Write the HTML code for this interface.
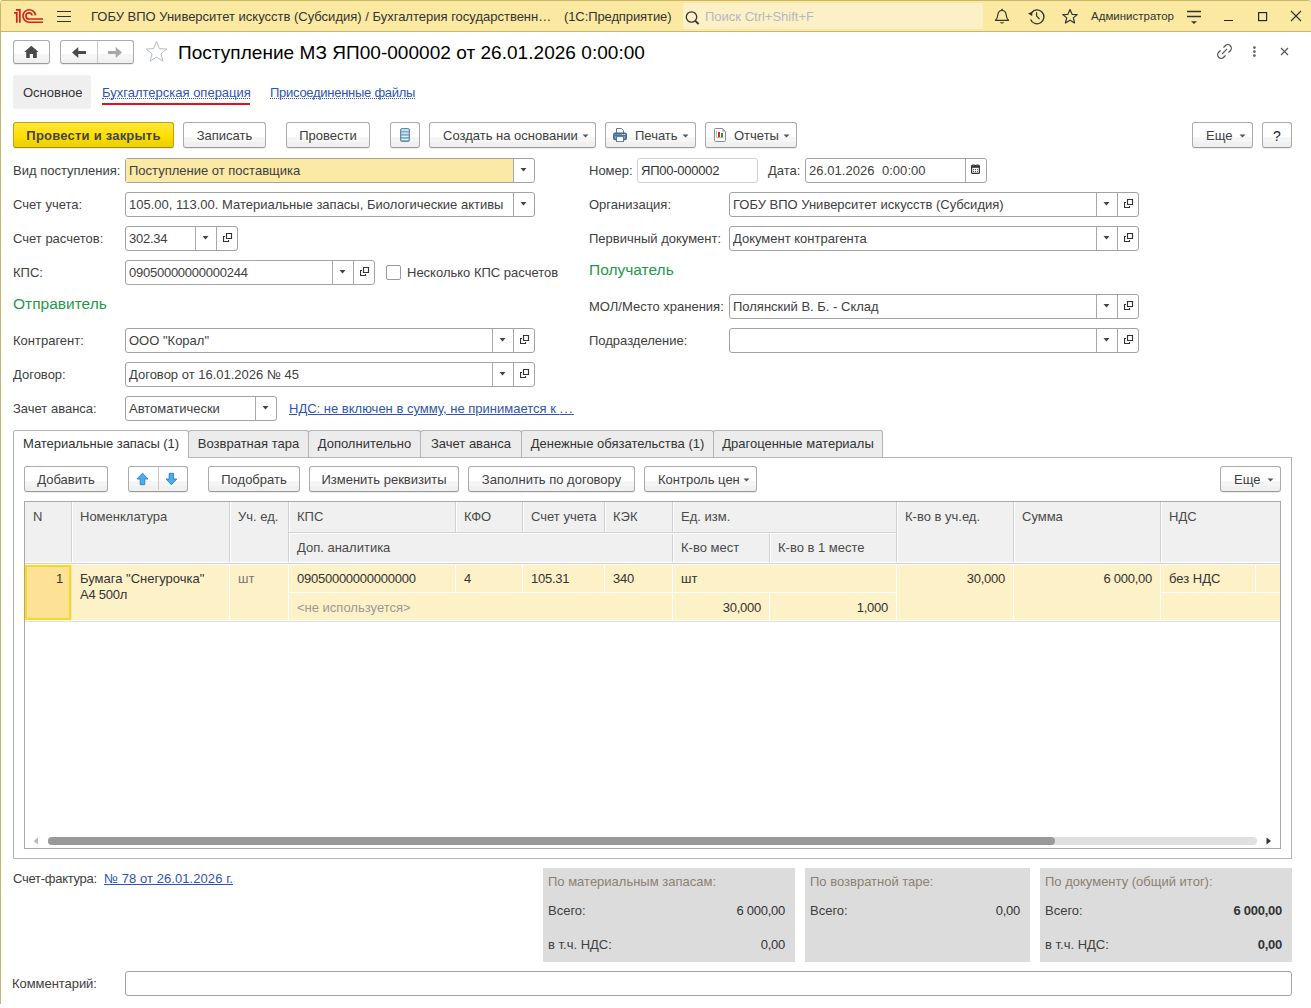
<!DOCTYPE html><html><head><meta charset="utf-8"><style>html,body{margin:0;padding:0}
body{width:1311px;height:1008px;position:relative;overflow:hidden;background:#fff;font-family:"Liberation Sans",sans-serif;font-size:13px;color:#404040}
.abs{position:absolute}
.t{position:absolute;line-height:20px;white-space:nowrap;font-size:13px}
.btn{position:absolute;height:26px;box-sizing:border-box;border:1px solid #ababab;border-bottom-color:#9a9a9a;border-radius:3px;background:linear-gradient(to bottom,#fff 0,#fff 58%,#f5f5f5 58%,#f5f5f5 80%,#f0f0f0 80%,#f0f0f0 100%);box-shadow:0 1px 0 rgba(0,0,0,.07)}
.ybtn{border-color:#c2a600;border-bottom-color:#a08c00;background:linear-gradient(to bottom,#ffe640 0,#ffe00a 45%,#fdde00 58%,#f1d400 80%,#eed200 100%)}
.fld{position:absolute;height:25px;box-sizing:border-box;border:1px solid #a3a3a3;border-radius:3px}
.lnk{color:#2d55b5}
</style></head><body><div class="abs" style="left:0;top:0;width:1311px;height:32px;box-sizing:border-box;background:#fbe9a2;border-top:1px solid #c7b76c;border-bottom:1px solid #c7b76c;border-radius:3px 3px 0 0"></div>
<div class="abs" style="left:0;top:3px;width:1px;height:1001px;background:#c7b76c"></div>
<svg class="abs" style="left:13px;top:8px" width="32" height="17" viewBox="13 8 32 17">
<g fill="none" stroke="#d8201c" stroke-width="1.6">
<path d="M14.1 12.85H16.8V22.8M15.9 9.9H19.85V22.8" stroke-width="1.75"/>
<path d="M35.45 15.4A6.25 6.25 0 1 0 29.25 22.2H43"/>
<path d="M32.1 15.5A3.1 3.1 0 1 0 29.1 19.05H43"/>
</g></svg>
<svg class="abs" style="left:56px;top:10px" width="16" height="13" viewBox="0 0 16 13"><path d="M1 1.5H15M1 6.5H15M1 11.5H15" stroke="#333" stroke-width="1.2"/></svg>
<div class="t" style="top:7px;left:91px;color:#333;">ГОБУ ВПО Университет искусств (Субсидия) / Бухгалтерия государственн…</div>
<div class="t" style="top:7px;left:564px;color:#333;letter-spacing:-0.1px;">(1С:Предприятие)</div>
<div class="abs" style="left:683px;top:3px;width:300px;height:26px;background:#fdf0c6;border-radius:2px"></div>
<svg class="abs" style="left:685px;top:11px" width="17" height="14" viewBox="0 0 17 14"><circle cx="6.5" cy="6" r="5.2" fill="none" stroke="#333" stroke-width="1.3"/><path d="M10.3 9.8L13.6 13" stroke="#333" stroke-width="1.8"/></svg>
<div class="t" style="top:7px;left:705px;color:#b5b8c0;">Поиск Ctrl+Shift+F</div>
<svg class="abs" style="left:990px;top:4px" width="24" height="24" viewBox="0 0 24 24"><path d="M5.5 16.3C7.6 14.6 7.7 12.5 8 10C8.4 7.5 10 6.5 12 6.5C14 6.5 15.6 7.5 16 10C16.3 12.5 16.4 14.6 18.5 16.3Z" fill="none" stroke="#333" stroke-width="1.2" stroke-linejoin="round"/><circle cx="12" cy="5.6" r="0.9" fill="#333"/><path d="M9.4 18.3H14.6L12 19.8Z" fill="#333"/></svg>
<svg class="abs" style="left:1020px;top:4px" width="30" height="24" viewBox="0 0 30 24"><path d="M11.6 8.6A6.9 6.9 0 1 1 10.6 15.4" fill="none" stroke="#333" stroke-width="1.3"/><path d="M8 9.4L12.6 7.4L12.1 12Z" fill="#333"/><path d="M16.6 8.3V12L19.6 15.2" fill="none" stroke="#333" stroke-width="1.2"/></svg>
<svg class="abs" style="left:1061px;top:8px" width="18" height="17" viewBox="0 0 18 17"><path d="M9 1.5L11.1 6.3L16.2 6.6L12.3 9.9L13.6 15L9 12.2L4.4 15L5.7 9.9L1.8 6.6L6.9 6.3Z" fill="none" stroke="#333" stroke-width="1.2" stroke-linejoin="round"/></svg>
<div class="t" style="top:6px;left:1091px;font-size:11.5px;color:#333;">Администратор</div>
<svg class="abs" style="left:1180px;top:4px" width="24" height="24" viewBox="0 0 24 24"><path d="M7 7.5H21M7 12.5H21" stroke="#333" stroke-width="1.3"/><path d="M11 17.2H17L14 20Z" fill="#333"/></svg>
<div class="abs" style="left:1224px;top:20px;width:9px;height:1px;background:#222"></div>
<svg class="abs" style="left:1257px;top:11px" width="11" height="11" viewBox="0 0 11 11"><rect x="1.6" y="1.6" width="8" height="8" fill="none" stroke="#222" stroke-width="1.15"/></svg>
<svg class="abs" style="left:1290px;top:10px" width="12" height="12" viewBox="0 0 12 12"><path d="M1 1L11 11M11 1L1 11" stroke="#333" stroke-width="1.2"/></svg>
<div class="btn" style="left:13px;top:40px;width:37px;height:24px"></div>
<svg class="abs" style="left:24px;top:45px" width="15" height="14" viewBox="0 0 15 14"><path d="M7.3 0.8L14.5 7H12.8V13H9V9H5.8V13H2.2V7H0.2Z" fill="#4a4a4a"/></svg>
<div class="btn" style="left:60px;top:40px;width:74px;height:24px"></div>
<div class="abs" style="left:97px;top:41px;width:1px;height:22px;background:#c8c8c8"></div>
<svg class="abs" style="left:72px;top:47px" width="14" height="11" viewBox="0 0 14 11"><path d="M0 5.5L6.3 0V4H14V7H6.3V11Z" fill="#4a4a4a"/></svg>
<svg class="abs" style="left:108px;top:47px" width="14" height="11" viewBox="0 0 14 11"><path d="M14 5.5L7.7 0V4H0V7H7.7V11Z" fill="#a8a8a8"/></svg>
<svg class="abs" style="left:144px;top:40px" width="25" height="24" viewBox="0 0 25 24"><path d="M12.5 1.5L15.3 8.6L22.8 9L17 13.8L18.9 21.2L12.5 17.1L6.1 21.2L8 13.8L2.2 9L9.7 8.6Z" fill="none" stroke="#b4bcc4" stroke-width="1" stroke-linejoin="round"/></svg>
<div class="t" style="top:43px;left:178px;font-size:19px;color:#000;letter-spacing:0.04px;">Поступление МЗ ЯП00-000002 от 26.01.2026 0:00:00</div>
<svg class="abs" style="left:1216px;top:43px" width="17" height="17" viewBox="0 0 17 17"><g fill="none" stroke="#555" stroke-width="1.25" stroke-linecap="round"><path d="M7.8 4.2L9.3 2.7A3.5 3.5 0 0 1 14.3 7.7L12.8 9.2"/><path d="M4.2 7.8L2.7 9.3A3.5 3.5 0 0 0 7.7 14.3L9.2 12.8"/><path d="M6.4 10.6L10.6 6.4"/></g></svg>
<svg class="abs" style="left:1251px;top:45px" width="7" height="13" viewBox="0 0 7 13"><circle cx="3.4" cy="2.6" r="1.4" fill="#666"/><circle cx="3.4" cy="6.6" r="1.4" fill="#666"/><circle cx="3.4" cy="10.6" r="1.4" fill="#666"/></svg>
<svg class="abs" style="left:1280px;top:47px" width="9" height="9" viewBox="0 0 9 9"><path d="M1 1L8 8M8 1L1 8" stroke="#555" stroke-width="1.1"/></svg>
<div class="abs" style="left:13px;top:75px;width:78px;height:34px;background:#efefef;border-radius:3px"></div>
<div class="t" style="top:83px;left:23px;color:#333;">Основное</div>
<div class="t lnk" style="top:83px;left:102px;">Бухгалтерская операция</div>
<div class="abs" style="left:102px;top:98px;width:148px;height:0;border-top:1px dotted #2d55b5"></div>
<div class="abs" style="left:102px;top:103px;width:148px;height:2px;background:#e8101a"></div>
<div class="t lnk" style="top:83px;left:270px;letter-spacing:-0.27px;">Присоединенные файлы</div>
<div class="abs" style="left:270px;top:98px;width:145px;height:0;border-top:1px dotted #2d55b5"></div>
<div class="btn ybtn" style="left:13px;top:122px;width:161px;"></div>
<div class="t" style="left:13px;width:161px;text-align:center;top:126px;font-weight:bold;"><span style="letter-spacing:0.22px;color:#454545">Провести и закрыть</span></div>
<div class="btn" style="left:183px;top:122px;width:83px;"></div>
<div class="t" style="left:183px;width:83px;text-align:center;top:126px;">Записать</div>
<div class="btn" style="left:286px;top:122px;width:84px;"></div>
<div class="t" style="left:286px;width:84px;text-align:center;top:126px;">Провести</div>
<div class="btn" style="left:390px;top:122px;width:30px;"></div>
<svg class="abs" style="left:400px;top:128px" width="10" height="14" viewBox="0 0 10 14"><rect x="0.5" y="0.5" width="9" height="13" rx="1.6" fill="#88a8c2" stroke="#6a87a0" stroke-width="1"/><g fill="#cff6f8"><rect x="1.5" y="1.3" width="7" height="1.5"/><rect x="1.5" y="4.6" width="7" height="1.3"/><rect x="1.5" y="7.7" width="7" height="1.3"/><rect x="1.5" y="10.8" width="7" height="1.3"/></g></svg>
<div class="btn" style="left:429px;top:122px;width:167px;"></div>
<div class="t" style="top:126px;left:443px;">Создать на основании</div>
<svg width="7" height="4" viewBox="0 0 7 4" style="position:absolute;left:582px;top:134px"><path d="M0.5 0.5H6.5L3.5 3.5Z" fill="#555"/></svg>
<div class="btn" style="left:605px;top:122px;width:91px;"></div>
<div class="t" style="top:126px;left:635px;">Печать</div>
<svg width="7" height="4" viewBox="0 0 7 4" style="position:absolute;left:682px;top:134px"><path d="M0.5 0.5H6.5L3.5 3.5Z" fill="#555"/></svg>
<svg class="abs" style="left:613px;top:128px" width="14" height="14" viewBox="0 0 14 14"><path d="M3.5 0.5H8.5L10.5 2.5V5.5H3.5Z" fill="#fff" stroke="#5a7a9a" stroke-width="1"/><rect x="0.75" y="5.25" width="12.5" height="6.2" rx="1.5" fill="#7aa0c4" stroke="#3d6a94" stroke-width="1.5"/><path d="M1.5 7.3H12.5" stroke="#3d6a94" stroke-width="1"/><circle cx="9.6" cy="6.5" r="0.6" fill="#fff"/><circle cx="11.4" cy="6.5" r="0.6" fill="#fff"/><rect x="3.5" y="8.6" width="7" height="5" fill="#fff" stroke="#5a7a9a" stroke-width="1"/></svg>
<div class="btn" style="left:705px;top:122px;width:92px;"></div>
<div class="t" style="top:126px;left:734px;">Отчеты</div>
<svg width="7" height="4" viewBox="0 0 7 4" style="position:absolute;left:783px;top:134px"><path d="M0.5 0.5H6.5L3.5 3.5Z" fill="#555"/></svg>
<svg class="abs" style="left:714px;top:128px" width="13" height="14" viewBox="0 0 13 14"><path d="M0.5 1.5Q0.5 0.5 1.5 0.5H8.5L11.5 3.5V12.5Q11.5 13.5 10.5 13.5H1.5Q0.5 13.5 0.5 12.5Z" fill="#fff" stroke="#8a8a8a" stroke-width="1"/><path d="M8.5 0.5V3.5H11.5Z" fill="#7f9bb5"/><path d="M2.5 2.5V9.5H9.5" fill="none" stroke="#9fb2c2" stroke-width="0.8"/><rect x="4" y="4" width="2" height="5.2" fill="#f02020"/><rect x="7" y="5" width="2" height="4.2" fill="#1aa01a"/></svg>
<div class="btn" style="left:1192px;top:122px;width:61px;"></div>
<div class="t" style="top:126px;left:1206px;">Еще</div>
<svg width="7" height="4" viewBox="0 0 7 4" style="position:absolute;left:1239px;top:134px"><path d="M0.5 0.5H6.5L3.5 3.5Z" fill="#555"/></svg>
<div class="btn" style="left:1262px;top:122px;width:30px;"></div>
<div class="t" style="left:1262px;width:30px;text-align:center;top:126px;"><span style="font-size:14px;color:#222">?</span></div>
<div class="t" style="top:161px;left:13px;color:#404040;">Вид поступления:</div>
<div class="fld" style="left:125px;top:158px;width:410px;background:#fff"></div>
<div class="abs" style="left:513px;top:159px;width:1px;height:23px;background:#a8a8a8"></div>
<svg width="7" height="4" viewBox="0 0 7 4" style="position:absolute;left:520px;top:168px"><path d="M0.5 0H6.5L3.5 3.5Z" fill="#444"/></svg>
<div class="abs" style="left:126px;top:159px;width:387px;height:23px;background:#fbe9a6;border-radius:1px 0 0 1px"></div>
<div class="t" style="top:161px;left:129px;width:382px;overflow:hidden;white-space:nowrap;">Поступление от поставщика</div>
<div class="t" style="top:195px;left:13px;color:#404040;">Счет учета:</div>
<div class="fld" style="left:125px;top:192px;width:410px;background:#fff"></div>
<div class="abs" style="left:513px;top:193px;width:1px;height:23px;background:#a8a8a8"></div>
<svg width="7" height="4" viewBox="0 0 7 4" style="position:absolute;left:520px;top:202px"><path d="M0.5 0H6.5L3.5 3.5Z" fill="#444"/></svg>
<div class="t" style="top:195px;left:129px;width:382px;overflow:hidden;white-space:nowrap;">105.00, 113.00. Материальные запасы, Биологические активы</div>
<div class="t" style="top:229px;left:13px;color:#404040;">Счет расчетов:</div>
<div class="fld" style="left:125px;top:226px;width:113px;background:#fff"></div>
<div class="abs" style="left:216px;top:227px;width:1px;height:23px;background:#a8a8a8"></div>
<svg width="10" height="10" viewBox="0 0 10 10" style="position:absolute;left:223px;top:233px"><path d="M3.5 0.5H8.5V5.5H3.5Z" fill="none" stroke="#333" stroke-width="1.15"/><path d="M2 3.5H0.5V8.5H5.5V7" fill="none" stroke="#333" stroke-width="1.15"/></svg>
<div class="abs" style="left:195px;top:227px;width:1px;height:23px;background:#a8a8a8"></div>
<svg width="7" height="4" viewBox="0 0 7 4" style="position:absolute;left:202px;top:236px"><path d="M0.5 0H6.5L3.5 3.5Z" fill="#444"/></svg>
<div class="t" style="top:229px;left:129px;letter-spacing:-0.25px;width:64px;overflow:hidden;white-space:nowrap;">302.34</div>
<div class="t" style="top:263px;left:13px;color:#404040;">КПС:</div>
<div class="fld" style="left:125px;top:260px;width:250px;background:#fff"></div>
<div class="abs" style="left:353px;top:261px;width:1px;height:23px;background:#a8a8a8"></div>
<svg width="10" height="10" viewBox="0 0 10 10" style="position:absolute;left:360px;top:267px"><path d="M3.5 0.5H8.5V5.5H3.5Z" fill="none" stroke="#333" stroke-width="1.15"/><path d="M2 3.5H0.5V8.5H5.5V7" fill="none" stroke="#333" stroke-width="1.15"/></svg>
<div class="abs" style="left:332px;top:261px;width:1px;height:23px;background:#a8a8a8"></div>
<svg width="7" height="4" viewBox="0 0 7 4" style="position:absolute;left:339px;top:270px"><path d="M0.5 0H6.5L3.5 3.5Z" fill="#444"/></svg>
<div class="t" style="top:263px;left:129px;letter-spacing:-0.25px;width:201px;overflow:hidden;white-space:nowrap;">09050000000000244</div>
<div class="abs" style="left:386px;top:265px;width:15px;height:15px;box-sizing:border-box;border:1px solid #9a9a9a;border-radius:2px;background:#fff"></div>
<div class="t" style="top:263px;left:407px;color:#404040;">Несколько КПС расчетов</div>
<div class="t" style="top:294px;left:13px;font-size:15.5px;color:#1e9a48;">Отправитель</div>
<div class="t" style="top:331px;left:13px;color:#404040;">Контрагент:</div>
<div class="fld" style="left:125px;top:328px;width:410px;background:#fff"></div>
<div class="abs" style="left:513px;top:329px;width:1px;height:23px;background:#a8a8a8"></div>
<svg width="10" height="10" viewBox="0 0 10 10" style="position:absolute;left:520px;top:335px"><path d="M3.5 0.5H8.5V5.5H3.5Z" fill="none" stroke="#333" stroke-width="1.15"/><path d="M2 3.5H0.5V8.5H5.5V7" fill="none" stroke="#333" stroke-width="1.15"/></svg>
<div class="abs" style="left:492px;top:329px;width:1px;height:23px;background:#a8a8a8"></div>
<svg width="7" height="4" viewBox="0 0 7 4" style="position:absolute;left:499px;top:338px"><path d="M0.5 0H6.5L3.5 3.5Z" fill="#444"/></svg>
<div class="t" style="top:331px;left:129px;width:361px;overflow:hidden;white-space:nowrap;">ООО "Корал"</div>
<div class="t" style="top:365px;left:13px;color:#404040;">Договор:</div>
<div class="fld" style="left:125px;top:362px;width:410px;background:#fff"></div>
<div class="abs" style="left:513px;top:363px;width:1px;height:23px;background:#a8a8a8"></div>
<svg width="10" height="10" viewBox="0 0 10 10" style="position:absolute;left:520px;top:369px"><path d="M3.5 0.5H8.5V5.5H3.5Z" fill="none" stroke="#333" stroke-width="1.15"/><path d="M2 3.5H0.5V8.5H5.5V7" fill="none" stroke="#333" stroke-width="1.15"/></svg>
<div class="abs" style="left:492px;top:363px;width:1px;height:23px;background:#a8a8a8"></div>
<svg width="7" height="4" viewBox="0 0 7 4" style="position:absolute;left:499px;top:372px"><path d="M0.5 0H6.5L3.5 3.5Z" fill="#444"/></svg>
<div class="t" style="top:365px;left:129px;width:361px;overflow:hidden;white-space:nowrap;">Договор от 16.01.2026 № 45</div>
<div class="t" style="top:399px;left:13px;color:#404040;">Зачет аванса:</div>
<div class="fld" style="left:125px;top:396px;width:152px;background:#fff"></div>
<div class="abs" style="left:255px;top:397px;width:1px;height:23px;background:#a8a8a8"></div>
<svg width="7" height="4" viewBox="0 0 7 4" style="position:absolute;left:262px;top:406px"><path d="M0.5 0H6.5L3.5 3.5Z" fill="#444"/></svg>
<div class="t" style="top:399px;left:129px;width:124px;overflow:hidden;white-space:nowrap;">Автоматически</div>
<div class="t lnk" style="top:399px;left:289px;text-decoration:underline;">НДС: не включен в сумму, не принимается к <span style="letter-spacing:1.2px">...</span></div>
<div class="t" style="top:161px;left:589px;color:#404040;">Номер:</div>
<div class="fld" style="left:637px;top:158px;width:121px;border-color:#d0d0d0"></div>
<div class="t" style="top:161px;left:641px;color:#333;letter-spacing:-0.25px;">ЯП00-000002</div>
<div class="t" style="top:161px;left:768px;color:#404040;">Дата:</div>
<div class="fld" style="left:805px;top:158px;width:182px;background:#fff"></div>
<div class="abs" style="left:965px;top:159px;width:1px;height:23px;background:#a8a8a8"></div>
<svg width="9" height="10" viewBox="0 0 9 10" style="position:absolute;left:971px;top:164px"><rect x="0.6" y="1.6" width="7.8" height="7.8" rx="0.9" fill="#fff" stroke="#333" stroke-width="1.2"/><rect x="0.3" y="1.3" width="8.4" height="2.5" fill="#333"/><circle cx="2.5" cy="1" r="0.8" fill="#fff" stroke="#333" stroke-width="0.7"/><circle cx="6.5" cy="1" r="0.8" fill="#fff" stroke="#333" stroke-width="0.7"/><g fill="#333"><circle cx="2.5" cy="5.6" r="0.6"/><circle cx="4.5" cy="5.6" r="0.6"/><circle cx="6.5" cy="5.6" r="0.6"/><circle cx="2.5" cy="7.6" r="0.6"/><circle cx="4.5" cy="7.6" r="0.6"/><circle cx="6.5" cy="7.6" r="0.6"/></g></svg>
<div class="t" style="top:161px;left:809px;width:154px;overflow:hidden;white-space:nowrap;"><span style="letter-spacing:0.05px">26.01.2026&nbsp; 0:00:00</span></div>
<div class="t" style="top:195px;left:589px;color:#404040;">Организация:</div>
<div class="fld" style="left:729px;top:192px;width:410px;background:#fff"></div>
<div class="abs" style="left:1117px;top:193px;width:1px;height:23px;background:#a8a8a8"></div>
<svg width="10" height="10" viewBox="0 0 10 10" style="position:absolute;left:1124px;top:199px"><path d="M3.5 0.5H8.5V5.5H3.5Z" fill="none" stroke="#333" stroke-width="1.15"/><path d="M2 3.5H0.5V8.5H5.5V7" fill="none" stroke="#333" stroke-width="1.15"/></svg>
<div class="abs" style="left:1096px;top:193px;width:1px;height:23px;background:#a8a8a8"></div>
<svg width="7" height="4" viewBox="0 0 7 4" style="position:absolute;left:1103px;top:202px"><path d="M0.5 0H6.5L3.5 3.5Z" fill="#444"/></svg>
<div class="t" style="top:195px;left:733px;width:361px;overflow:hidden;white-space:nowrap;">ГОБУ ВПО Университет искусств (Субсидия)</div>
<div class="t" style="top:229px;left:589px;color:#404040;">Первичный документ:</div>
<div class="fld" style="left:729px;top:226px;width:410px;background:#fff"></div>
<div class="abs" style="left:1117px;top:227px;width:1px;height:23px;background:#a8a8a8"></div>
<svg width="10" height="10" viewBox="0 0 10 10" style="position:absolute;left:1124px;top:233px"><path d="M3.5 0.5H8.5V5.5H3.5Z" fill="none" stroke="#333" stroke-width="1.15"/><path d="M2 3.5H0.5V8.5H5.5V7" fill="none" stroke="#333" stroke-width="1.15"/></svg>
<div class="abs" style="left:1096px;top:227px;width:1px;height:23px;background:#a8a8a8"></div>
<svg width="7" height="4" viewBox="0 0 7 4" style="position:absolute;left:1103px;top:236px"><path d="M0.5 0H6.5L3.5 3.5Z" fill="#444"/></svg>
<div class="t" style="top:229px;left:733px;width:361px;overflow:hidden;white-space:nowrap;">Документ контрагента</div>
<div class="t" style="top:260px;left:589px;font-size:15.5px;color:#1e9a48;">Получатель</div>
<div class="t" style="top:297px;left:589px;color:#404040;">МОЛ/Место хранения:</div>
<div class="fld" style="left:729px;top:294px;width:410px;background:#fff"></div>
<div class="abs" style="left:1117px;top:295px;width:1px;height:23px;background:#a8a8a8"></div>
<svg width="10" height="10" viewBox="0 0 10 10" style="position:absolute;left:1124px;top:301px"><path d="M3.5 0.5H8.5V5.5H3.5Z" fill="none" stroke="#333" stroke-width="1.15"/><path d="M2 3.5H0.5V8.5H5.5V7" fill="none" stroke="#333" stroke-width="1.15"/></svg>
<div class="abs" style="left:1096px;top:295px;width:1px;height:23px;background:#a8a8a8"></div>
<svg width="7" height="4" viewBox="0 0 7 4" style="position:absolute;left:1103px;top:304px"><path d="M0.5 0H6.5L3.5 3.5Z" fill="#444"/></svg>
<div class="t" style="top:297px;left:733px;width:361px;overflow:hidden;white-space:nowrap;">Полянский В. Б. - Склад</div>
<div class="t" style="top:331px;left:589px;color:#404040;">Подразделение:</div>
<div class="fld" style="left:729px;top:328px;width:410px;background:#fff"></div>
<div class="abs" style="left:1117px;top:329px;width:1px;height:23px;background:#a8a8a8"></div>
<svg width="10" height="10" viewBox="0 0 10 10" style="position:absolute;left:1124px;top:335px"><path d="M3.5 0.5H8.5V5.5H3.5Z" fill="none" stroke="#333" stroke-width="1.15"/><path d="M2 3.5H0.5V8.5H5.5V7" fill="none" stroke="#333" stroke-width="1.15"/></svg>
<div class="abs" style="left:1096px;top:329px;width:1px;height:23px;background:#a8a8a8"></div>
<svg width="7" height="4" viewBox="0 0 7 4" style="position:absolute;left:1103px;top:338px"><path d="M0.5 0H6.5L3.5 3.5Z" fill="#444"/></svg>
<div class="abs" style="left:188px;top:457px;width:1104px;height:1px;background:#b4b4b4"></div>
<div class="abs" style="left:13px;top:457px;width:1279px;height:402px;box-sizing:border-box;border:1px solid #b4b4b4;border-top:none"></div>
<div class="abs" style="left:13px;top:430px;width:176px;height:28px;box-sizing:border-box;border:1px solid #b4b4b4;border-bottom:none;border-radius:3px 3px 0 0;background:#fff"></div>
<div class="t" style="top:434px;left:23px;color:#333;letter-spacing:-0.05px;">Материальные запасы (1)</div>
<div class="abs" style="left:188px;top:430px;width:121px;height:27px;box-sizing:border-box;border:1px solid #b4b4b4;border-bottom:none;border-radius:3px 3px 0 0;background:#ececec"></div>
<div class="t" style="left:188px;width:121px;text-align:center;top:434px;color:#333">Возвратная тара</div>
<div class="abs" style="left:308px;top:430px;width:113px;height:27px;box-sizing:border-box;border:1px solid #b4b4b4;border-bottom:none;border-radius:3px 3px 0 0;background:#ececec"></div>
<div class="t" style="left:308px;width:113px;text-align:center;top:434px;color:#333">Дополнительно</div>
<div class="abs" style="left:420px;top:430px;width:102px;height:27px;box-sizing:border-box;border:1px solid #b4b4b4;border-bottom:none;border-radius:3px 3px 0 0;background:#ececec"></div>
<div class="t" style="left:420px;width:102px;text-align:center;top:434px;color:#333">Зачет аванса</div>
<div class="abs" style="left:521px;top:430px;width:193px;height:27px;box-sizing:border-box;border:1px solid #b4b4b4;border-bottom:none;border-radius:3px 3px 0 0;background:#ececec"></div>
<div class="t" style="left:521px;width:193px;text-align:center;top:434px;color:#333">Денежные обязательства (1)</div>
<div class="abs" style="left:713px;top:430px;width:170px;height:27px;box-sizing:border-box;border:1px solid #b4b4b4;border-bottom:none;border-radius:3px 3px 0 0;background:#ececec"></div>
<div class="t" style="left:713px;width:170px;text-align:center;top:434px;color:#333">Драгоценные материалы</div>
<div class="btn" style="left:24px;top:466px;width:84px;"></div>
<div class="t" style="left:24px;width:84px;text-align:center;top:470px;">Добавить</div>
<div class="btn" style="left:128px;top:466px;width:60px;"></div>
<div class="abs" style="left:158px;top:467px;width:1px;height:23px;background:#c8c8c8"></div>
<svg class="abs" style="left:0;top:0" width="200" height="500" viewBox="0 0 200 500"><g fill="#47aef0" stroke="#2b80c4" stroke-width="0.9" stroke-linejoin="miter"><path d="M142.5 473.2L148 479H144.8V484.7H140.2V479H137Z"/><path d="M171.4 484.7L176.8 479H173.6V473.3H169.2V479H166Z"/></g></svg>
<div class="btn" style="left:208px;top:466px;width:92px;"></div>
<div class="t" style="left:208px;width:92px;text-align:center;top:470px;">Подобрать</div>
<div class="btn" style="left:309px;top:466px;width:150px;"></div>
<div class="t" style="left:309px;width:150px;text-align:center;top:470px;">Изменить реквизиты</div>
<div class="btn" style="left:468px;top:466px;width:167px;"></div>
<div class="t" style="left:468px;width:167px;text-align:center;top:470px;">Заполнить по договору</div>
<div class="btn" style="left:644px;top:466px;width:113px;"></div>
<div class="t" style="top:470px;left:658px;">Контроль цен</div>
<svg width="7" height="4" viewBox="0 0 7 4" style="position:absolute;left:743px;top:478px"><path d="M0.5 0.5H6.5L3.5 3.5Z" fill="#555"/></svg>
<div class="btn" style="left:1220px;top:466px;width:61px;"></div>
<div class="t" style="top:470px;left:1234px;">Еще</div>
<svg width="7" height="4" viewBox="0 0 7 4" style="position:absolute;left:1267px;top:478px"><path d="M0.5 0.5H6.5L3.5 3.5Z" fill="#555"/></svg>
<div class="abs" style="left:24px;top:501px;width:1257px;height:348px;box-sizing:border-box;border:1px solid #a8a8a8;background:#fff"></div>
<div class="abs" style="left:25px;top:502px;width:1255px;height:61px;background:#f0f0f0"></div>
<div class="abs" style="left:25px;top:562px;width:1255px;height:1px;background:#fff"></div>
<div class="abs" style="left:25px;top:563px;width:1255px;height:1px;background:#d2d2d2"></div>
<div class="abs" style="left:25px;top:564px;width:1255px;height:1px;background:#fff"></div>
<div class="abs" style="left:25px;top:565px;width:1255px;height:55px;background:#fdf1c8"></div>
<div class="abs" style="left:25px;top:620px;width:1255px;height:1px;background:#fff"></div>
<div class="abs" style="left:25px;top:621px;width:1255px;height:1px;background:#e2e2e2"></div>
<div class="abs" style="left:71px;top:502px;width:1px;height:60px;background:#d2d2d2"></div>
<div class="abs" style="left:72px;top:502px;width:1px;height:60px;background:#fff"></div>
<div class="abs" style="left:229px;top:502px;width:1px;height:60px;background:#d2d2d2"></div>
<div class="abs" style="left:230px;top:502px;width:1px;height:60px;background:#fff"></div>
<div class="abs" style="left:288px;top:502px;width:1px;height:60px;background:#d2d2d2"></div>
<div class="abs" style="left:289px;top:502px;width:1px;height:60px;background:#fff"></div>
<div class="abs" style="left:896px;top:502px;width:1px;height:60px;background:#d2d2d2"></div>
<div class="abs" style="left:897px;top:502px;width:1px;height:60px;background:#fff"></div>
<div class="abs" style="left:1013px;top:502px;width:1px;height:60px;background:#d2d2d2"></div>
<div class="abs" style="left:1014px;top:502px;width:1px;height:60px;background:#fff"></div>
<div class="abs" style="left:1160px;top:502px;width:1px;height:60px;background:#d2d2d2"></div>
<div class="abs" style="left:1161px;top:502px;width:1px;height:60px;background:#fff"></div>
<div class="abs" style="left:455px;top:502px;width:1px;height:30px;background:#d2d2d2"></div>
<div class="abs" style="left:456px;top:502px;width:1px;height:30px;background:#fff"></div>
<div class="abs" style="left:522px;top:502px;width:1px;height:30px;background:#d2d2d2"></div>
<div class="abs" style="left:523px;top:502px;width:1px;height:30px;background:#fff"></div>
<div class="abs" style="left:604px;top:502px;width:1px;height:30px;background:#d2d2d2"></div>
<div class="abs" style="left:605px;top:502px;width:1px;height:30px;background:#fff"></div>
<div class="abs" style="left:672px;top:502px;width:1px;height:60px;background:#d2d2d2"></div>
<div class="abs" style="left:673px;top:502px;width:1px;height:60px;background:#fff"></div>
<div class="abs" style="left:769px;top:534px;width:1px;height:28px;background:#d2d2d2"></div>
<div class="abs" style="left:770px;top:534px;width:1px;height:28px;background:#fff"></div>
<div class="abs" style="left:289px;top:532px;width:607px;height:1px;background:#d2d2d2"></div>
<div class="abs" style="left:289px;top:533px;width:607px;height:1px;background:#fff"></div>
<div class="abs" style="left:71px;top:565px;width:1px;height:55px;background:#e4e4e4"></div>
<div class="abs" style="left:229px;top:565px;width:1px;height:55px;background:#fff"></div>
<div class="abs" style="left:288px;top:565px;width:1px;height:55px;background:#fff"></div>
<div class="abs" style="left:896px;top:565px;width:1px;height:55px;background:#fff"></div>
<div class="abs" style="left:1013px;top:565px;width:1px;height:55px;background:#fff"></div>
<div class="abs" style="left:1160px;top:565px;width:1px;height:55px;background:#fff"></div>
<div class="abs" style="left:455px;top:565px;width:1px;height:27px;background:#fff"></div>
<div class="abs" style="left:522px;top:565px;width:1px;height:27px;background:#fff"></div>
<div class="abs" style="left:604px;top:565px;width:1px;height:27px;background:#fff"></div>
<div class="abs" style="left:672px;top:565px;width:1px;height:55px;background:#fff"></div>
<div class="abs" style="left:769px;top:593px;width:1px;height:27px;background:#fff"></div>
<div class="abs" style="left:1255px;top:565px;width:1px;height:27px;background:#fff"></div>
<div class="abs" style="left:289px;top:592px;width:607px;height:1px;background:#fff"></div>
<div class="abs" style="left:1161px;top:592px;width:119px;height:1px;background:#fff"></div>
<div class="abs" style="left:25px;top:565px;width:46px;height:55px;box-sizing:border-box;border:2px solid #fcd817;background:#fde196"></div>
<div class="t" style="top:507px;left:33px;color:#4a4a4a;">N</div>
<div class="t" style="top:507px;left:80px;color:#4a4a4a;">Номенклатура</div>
<div class="t" style="top:507px;left:238px;color:#4a4a4a;">Уч. ед.</div>
<div class="t" style="top:507px;left:297px;color:#4a4a4a;">КПС</div>
<div class="t" style="top:507px;left:464px;color:#4a4a4a;">КФО</div>
<div class="t" style="top:507px;left:531px;color:#4a4a4a;">Счет учета</div>
<div class="t" style="top:507px;left:613px;color:#4a4a4a;">КЭК</div>
<div class="t" style="top:507px;left:681px;color:#4a4a4a;">Ед. изм.</div>
<div class="t" style="top:507px;left:905px;color:#4a4a4a;">К-во в уч.ед.</div>
<div class="t" style="top:507px;left:1022px;color:#4a4a4a;">Сумма</div>
<div class="t" style="top:507px;left:1169px;color:#4a4a4a;">НДС</div>
<div class="t" style="top:538px;left:297px;color:#4a4a4a;">Доп. аналитика</div>
<div class="t" style="top:538px;left:681px;color:#4a4a4a;">К-во мест</div>
<div class="t" style="top:538px;left:778px;color:#4a4a4a;">К-во в 1 месте</div>
<div class="t" style="top:569px;left:-337px;width:400px;text-align:right;color:#333;letter-spacing:-0.25px;">1</div>
<div class="t" style="top:569px;left:80px;color:#333;">Бумага "Снегурочка"</div>
<div class="t" style="top:585px;left:80px;color:#333;letter-spacing:-0.25px;">А4 500л</div>
<div class="t" style="top:569px;left:238px;color:#777;">шт</div>
<div class="t" style="top:569px;left:297px;color:#333;letter-spacing:-0.25px;">09050000000000000</div>
<div class="t" style="top:569px;left:464px;color:#333;letter-spacing:-0.25px;">4</div>
<div class="t" style="top:569px;left:531px;color:#333;letter-spacing:-0.25px;">105.31</div>
<div class="t" style="top:569px;left:613px;color:#333;letter-spacing:-0.25px;">340</div>
<div class="t" style="top:569px;left:681px;color:#333;">шт</div>
<div class="t" style="top:569px;left:605px;width:400px;text-align:right;color:#333;letter-spacing:-0.25px;">30,000</div>
<div class="t" style="top:569px;left:752px;width:400px;text-align:right;color:#333;letter-spacing:-0.25px;">6 000,00</div>
<div class="t" style="top:569px;left:1169px;color:#333;">без НДС</div>
<div class="t" style="top:598px;left:297px;color:#999;">&lt;не используется&gt;</div>
<div class="t" style="top:598px;left:361px;width:400px;text-align:right;color:#333;letter-spacing:-0.25px;">30,000</div>
<div class="t" style="top:598px;left:488px;width:400px;text-align:right;color:#333;letter-spacing:-0.25px;">1,000</div>
<svg class="abs" style="left:33px;top:837px" width="6" height="8" viewBox="0 0 6 8"><path d="M5 0.5V7.5L0.5 4Z" fill="#bbb"/></svg>
<div class="abs" style="left:48px;top:837px;width:1209px;height:8px;background:#e0e0e0;border-radius:4px"></div>
<div class="abs" style="left:48px;top:837px;width:1007px;height:8px;background:#999;border-radius:4px"></div>
<svg class="abs" style="left:1266px;top:837px" width="6" height="8" viewBox="0 0 6 8"><path d="M0.5 0.5V7.5L5 4Z" fill="#333"/></svg>
<div class="t" style="top:869px;left:13px;color:#404040;letter-spacing:-0.27px;">Счет-фактура:</div>
<div class="t lnk" style="top:869px;left:104px;text-decoration:underline;letter-spacing:0.07px;">№ 78 от 26.01.2026 г.</div>
<div class="abs" style="left:543px;top:868px;width:252px;height:94px;background:#dcdcdc"></div>
<div class="t" style="top:872px;left:548px;color:#8c8070;">По материальным запасам:</div>
<div class="t" style="top:901px;left:548px;color:#404040;">Всего:</div>
<div class="t" style="top:901px;left:385px;width:400px;text-align:right;color:#333;letter-spacing:-0.25px;">6 000,00</div>
<div class="t" style="top:935px;left:548px;color:#404040;">в т.ч. НДС:</div>
<div class="t" style="top:935px;left:385px;width:400px;text-align:right;color:#333;letter-spacing:-0.25px;">0,00</div>
<div class="abs" style="left:805px;top:868px;width:225px;height:94px;background:#dcdcdc"></div>
<div class="t" style="top:872px;left:810px;color:#8c8070;">По возвратной таре:</div>
<div class="t" style="top:901px;left:810px;color:#404040;">Всего:</div>
<div class="t" style="top:901px;left:620px;width:400px;text-align:right;color:#333;letter-spacing:-0.25px;">0,00</div>
<div class="abs" style="left:1040px;top:868px;width:252px;height:94px;background:#dcdcdc"></div>
<div class="t" style="top:872px;left:1045px;color:#8c8070;">По документу (общий итог):</div>
<div class="t" style="top:901px;left:1045px;color:#404040;">Всего:</div>
<div class="t" style="top:901px;left:882px;width:400px;text-align:right;color:#333;font-weight:bold;letter-spacing:-0.25px;">6 000,00</div>
<div class="t" style="top:935px;left:1045px;color:#404040;">в т.ч. НДС:</div>
<div class="t" style="top:935px;left:882px;width:400px;text-align:right;color:#333;font-weight:bold;letter-spacing:-0.25px;">0,00</div>
<div class="t" style="top:974px;left:12px;color:#404040;letter-spacing:-0.05px;">Комментарий:</div>
<div class="fld" style="left:125px;top:971px;width:1167px;height:25px"></div></body></html>
